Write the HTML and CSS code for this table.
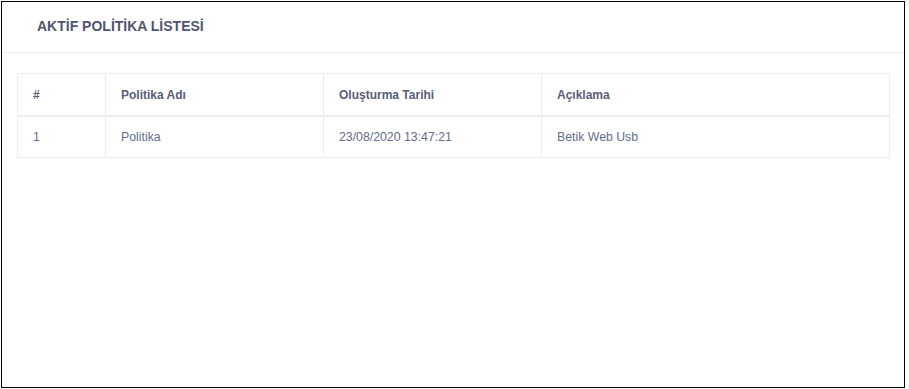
FILE: index.html
```html
<!DOCTYPE html>
<html lang="tr">
<head>
    <meta charset="UTF-8">
    <meta name="viewport" content="width=device-width, initial-scale=1.0">
    <title>Aktif Politika Listesi</title>
    <link rel="stylesheet" href="styles.css">
</head>
<body>
    <div class="portlet">
        <div class="portlet-head">
            <h3 class="portlet-title">AKTİF POLİTİKA LİSTESİ</h3>
        </div>
        <div class="portlet-body">
            <table class="policy-table">
                <thead>
                    <tr>
                        <th class="col-no">#</th>
                        <th class="col-name">Politika Adı</th>
                        <th class="col-date">Oluşturma Tarihi</th>
                        <th>Açıklama</th>
                    </tr>
                </thead>
                <tbody>
                    <tr>
                        <td>1</td>
                        <td>Politika</td>
                        <td>23/08/2020 13:47:21</td>
                        <td>Betik Web Usb</td>
                    </tr>
                </tbody>
            </table>
        </div>
    </div>
</body>
</html>
```

FILE: styles.css
```css
body {
    margin: 0;
    font-family: "Liberation Sans", Arial, sans-serif;
    background: #fff;
}
.portlet {
    box-sizing: border-box;
    width: 904px;
    height: 387px;
    margin: 1px 0 0 1px;
    border: 1px solid #000;
    background: #fff;
}
.portlet-head {
    display: flex;
    align-items: center;
    height: 50px;
    padding: 0 35px;
    border-bottom: 1px solid #ebedf2;
}
.portlet-title {
    margin: 0 0 3px;
    font-size: 14px;
    font-weight: bold;
    color: #50566f;
}
.portlet-body {
    padding: 20px 14px 20px 15px;
}
.policy-table {
    width: 100%;
    border-collapse: collapse;
    font-size: 12.3px;
}
.policy-table th,
.policy-table td {
    border: 1px solid #ebedf2;
    text-align: left;
    padding: 0 15px;
}
.policy-table th {
    height: 41px;
    font-size: 12px;
    font-weight: bold;
    color: #575d7a;
    border-bottom: 2px solid #ebedf2;
}
.policy-table td {
    height: 40px;
    color: #646c8e;
}
.col-no {
    width: 57px;
}
.col-name,
.col-date {
    width: 187px;
}
```
